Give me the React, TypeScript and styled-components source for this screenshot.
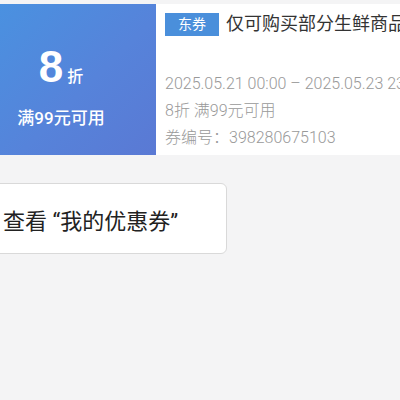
import React from 'react'
import styled, { createGlobalStyle } from 'styled-components'

const Global = createGlobalStyle`
  html, body {
    margin: 0;
    padding: 0;
    background: #f4f4f5;
    font-family: Roboto, "Noto Sans CJK SC", sans-serif;
    overflow: hidden;
  }
`

const Page = styled.div`
  width: 400px;
  height: 400px;
  overflow: hidden;
  padding-top: 4px;
  box-sizing: border-box;
`

const Card = styled.div`
  display: flex;
  height: 151px;
  background: #fff;
  width: 600px;
`

const Face = styled.div`
  width: 156px;
  flex-shrink: 0;
  box-sizing: border-box;
  padding: 18px 34px 0 0;
  display: flex;
  flex-direction: column;
  align-items: center;
  justify-content: center;
  color: #fff;
  background: linear-gradient(135deg, #4a91e0 0%, #5683da 55%, #5a79d4 100%);
  .value {
    display: flex;
    align-items: baseline;
    margin-top: -6px;
    .num {
      font-family: "Liberation Sans", Arial, sans-serif;
      font-weight: 700;
      font-size: 44px;
      line-height: 48px;
    }
    .unit {
      font-size: 16px;
      margin-left: 4px;
      font-weight: 500;
    }
  }
  .cond {
    margin-top: 17px;
    font-size: 17px;
    line-height: 20px;
    font-weight: 500;
  }
`

const Info = styled.div`
  padding: 8px 0 0 9px;
  display: flex;
  flex-direction: column;
  white-space: nowrap;
`

const TitleRow = styled.div`
  display: flex;
  align-items: center;
  gap: 7px;
`

const Tag = styled.span`
  background: #4a8fdb;
  color: #fff;
  font-size: 14px;
  line-height: 23px;
  height: 23px;
  width: 54px;
  text-align: center;
`

const Title = styled.span`
  font-size: 18px;
  color: #333;
  line-height: 24px;
`

const Line = styled.div<{ $gap: number }>`
  margin-top: ${p => p.$gap}px;
  font-size: 16px;
  font-weight: 300;
  line-height: 18px;
  color: #999;
`

const ViewButton = styled.div`
  margin-top: 28px;
  margin-left: -12px;
  width: 239px;
  height: 71px;
  box-sizing: border-box;
  border: 1px solid #d9d9d9;
  border-radius: 6px;
  background: #fff;
  display: flex;
  align-items: center;
  padding-left: 14px;
  font-size: 22px;
  color: #222;
`

export default function App () {
  return (
    <Page>
      <Global />
      <Card>
        <Face>
          <div className="value">
            <span className="num">8</span>
            <span className="unit">折</span>
          </div>
          <div className="cond">满99元可用</div>
        </Face>
        <Info>
          <TitleRow>
            <Tag>东券</Tag>
            <Title>仅可购买部分生鲜商品</Title>
          </TitleRow>
          <Line $gap={39}>2025.05.21 00:00 – 2025.05.23 23:59</Line>
          <Line $gap={9}>8折 满99元可用</Line>
          <Line $gap={9}>券编号：398280675103</Line>
        </Info>
      </Card>
      <ViewButton>查看 “我的优惠券”</ViewButton>
    </Page>
  )
}
